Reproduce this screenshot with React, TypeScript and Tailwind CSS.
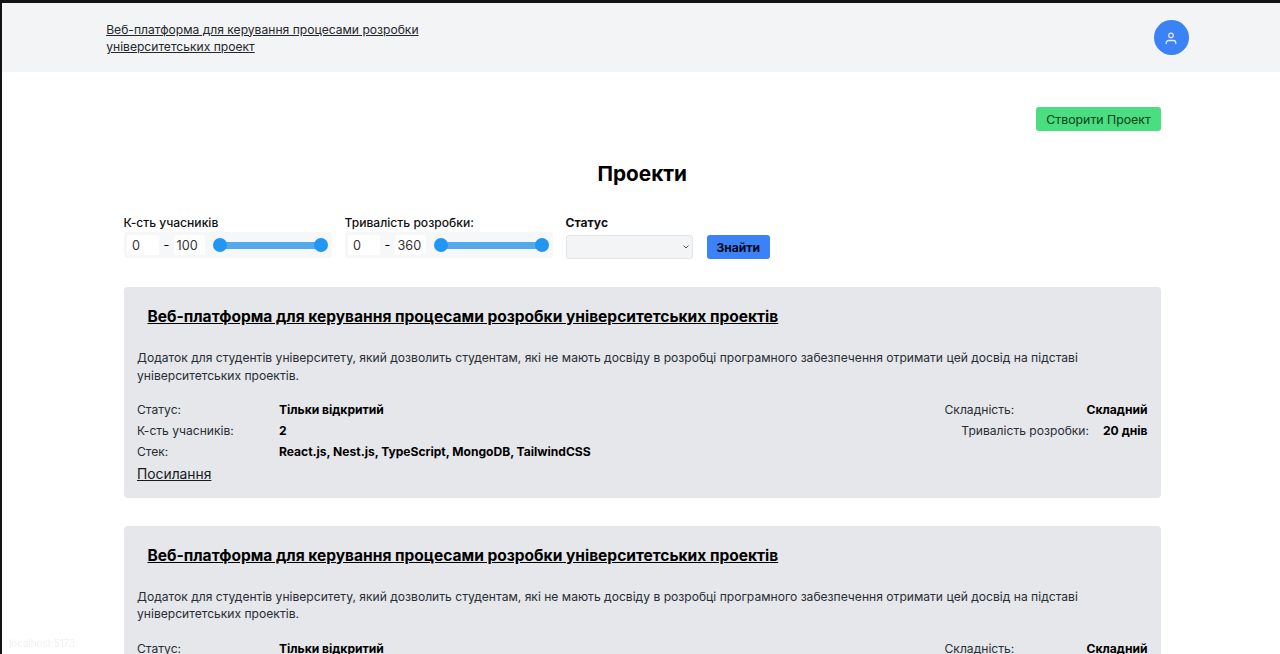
const TITLE = 'Веб-платформа для керування процесами розробки університетських проектів';

function RangeFilter({ label, max }: { label: string; max: number }) {
  return (
    <div className="w-[208px]">
      <div className="h-[17px] whitespace-nowrap text-[12.1px] font-medium leading-[16px] text-[#111]">{label}</div>
      <div className="flex h-[26px] items-center rounded-[3px] bg-[#f6f7f8] pl-[3px] text-[12.7px] text-[#333]">
        <div className="flex h-[20px] w-[32px] items-center rounded-[2px] bg-white pl-[5.5px] pt-[2px]">0</div>
        <div className="w-[15px] pl-[5px] text-black">-</div>
        <div className="flex h-[20px] w-[31px] items-center rounded-[2px] bg-white pl-[3px] pt-[2px]">{max}</div>
        <div className="ml-[8px] flex h-[14px] w-[115px] items-center justify-between bg-[linear-gradient(#54a8ec,#54a8ec)] bg-[length:101px_7px] bg-center bg-no-repeat">
          <span className="size-[14px] rounded-full bg-[#2196f3]" />
          <span className="size-[14px] rounded-full bg-[#2196f3]" />
        </div>
      </div>
    </div>
  );
}

function Field({ name, value }: { name: string; value: string }) {
  return (
    <div className="flex h-[20.75px] items-center">
      <span className="w-[142px]">{name}</span>
      <span className="font-bold tracking-[-0.02px] text-black">{value}</span>
    </div>
  );
}

function ProjectCard() {
  return (
    <article className="h-[210.5px] shrink-0 rounded-[4px] bg-[#e5e7eb] px-[13.5px] pt-[17px] text-[12.1px] text-[#292d33]">
      <h2 className="ml-[10.5px] h-[26px] whitespace-nowrap text-[15.52px] font-bold leading-[26px] text-black underline">{TITLE}</h2>
      <p className="mt-[19px] h-[35px] whitespace-nowrap leading-[17.5px]">
        Додаток для студентів університету, який дозволить студентам, які не мають досвіду в розробці програмного забезпечення отримати цей досвід на підставі<br />університетських проектів.
      </p>
      <div className="mt-[16px] flex justify-between whitespace-nowrap">
        <div>
          <Field name="Статус:" value="Тільки відкритий" />
          <Field name="К-сть учасників:" value="2" />
          <Field name="Стек:" value="React.js, Nest.js, TypeScript, MongoDB, TailwindCSS" />
          <a className="block h-[24px] text-[13.84px] leading-[24px] text-[#171a1e] underline">Посилання</a>
        </div>
        <div className="w-[203px]">
          <div className="flex h-[20.75px] items-center justify-between">
            <span>Складність:</span>
            <span className="font-bold text-black">Складний</span>
          </div>
          <div className="flex h-[20.75px] items-center justify-end gap-[14px]">
            <span>Тривалість розробки:</span>
            <span className="font-bold text-black">20 днів</span>
          </div>
        </div>
      </div>
    </article>
  );
}

export default function App() {
  return (
    <div className="h-[654px] overflow-hidden border-l-2 border-t-[3px] border-[#111315] bg-white font-['Inter','Liberation_Sans',sans-serif]">
      <header className="flex h-[69px] items-center justify-between bg-[#f3f4f6] pl-[104.2px] pr-[91.5px]">
        <a className="whitespace-nowrap pt-px text-[12.1px] leading-[17.3px] text-[#24272b] underline">
          Веб-платформа для керування процесами розробки<br />університетських проект
        </a>
        <button className="flex size-[35px] items-center justify-center rounded-full bg-[#3b82f6]">
          <svg width="14" height="14" viewBox="0 0 14 14" fill="none" stroke="#dfeaff" strokeWidth="1.3" strokeLinecap="round">
            <circle cx="7" cy="4.4" r="2.3" />
            <path d="M2.200 12.600v-.6A2.500 2.500 0 0 1 4.700 9.500h4.600a2.500 2.500 0 0 1 2.500 2.500v.6" />
          </svg>
        </button>
      </header>
      <main className="ml-[121.5px] flex w-[1037.5px] flex-col">
        <button className="mt-[35px] h-[24px] w-[125px] self-end whitespace-nowrap rounded-[3px] bg-[#4ade80] text-[12.3px] leading-[25px] text-[#083c1c]">Створити Проект</button>
        <h1 className="mt-[27px] h-[32px] text-center text-[20.75px] font-bold leading-[32px] text-black">Проекти</h1>
        <div className="mt-[25px] flex h-[46px]">
          <RangeFilter label="К-сть учасників" max={100} />
          <div className="ml-[13px]"><RangeFilter label="Тривалість розробки:" max={360} /></div>
          <div className="ml-[13px]">
            <div className="h-[17px] text-[12.1px] font-bold leading-[16px] text-[#111]">Статус</div>
            <div className="mt-[3px] flex h-[24px] w-[127px] items-center justify-end rounded-[3px] border border-[#e2e5e9] bg-[#f3f4f6] pr-[3px]">
              <svg width="6" height="4" viewBox="0 0 6 4" fill="none" stroke="#555" strokeWidth="1"><path d="M.5.5 3 3 5.5.5" /></svg>
            </div>
          </div>
          <button className="ml-[14px] mt-[20px] h-[24px] w-[63.5px] rounded-[3px] bg-[#3b82f6] text-[12.1px] font-bold leading-[25px] text-[#020817]">Знайти</button>
        </div>
        <div className="mt-[26px] flex flex-col gap-[28px]">
          <ProjectCard />
          <ProjectCard />
        </div>
      </main>
      <div className="fixed bottom-[2px] left-[9px] text-[9.8px] text-[#f0f0f0]">localhost:5173</div>
    </div>
  );
}
